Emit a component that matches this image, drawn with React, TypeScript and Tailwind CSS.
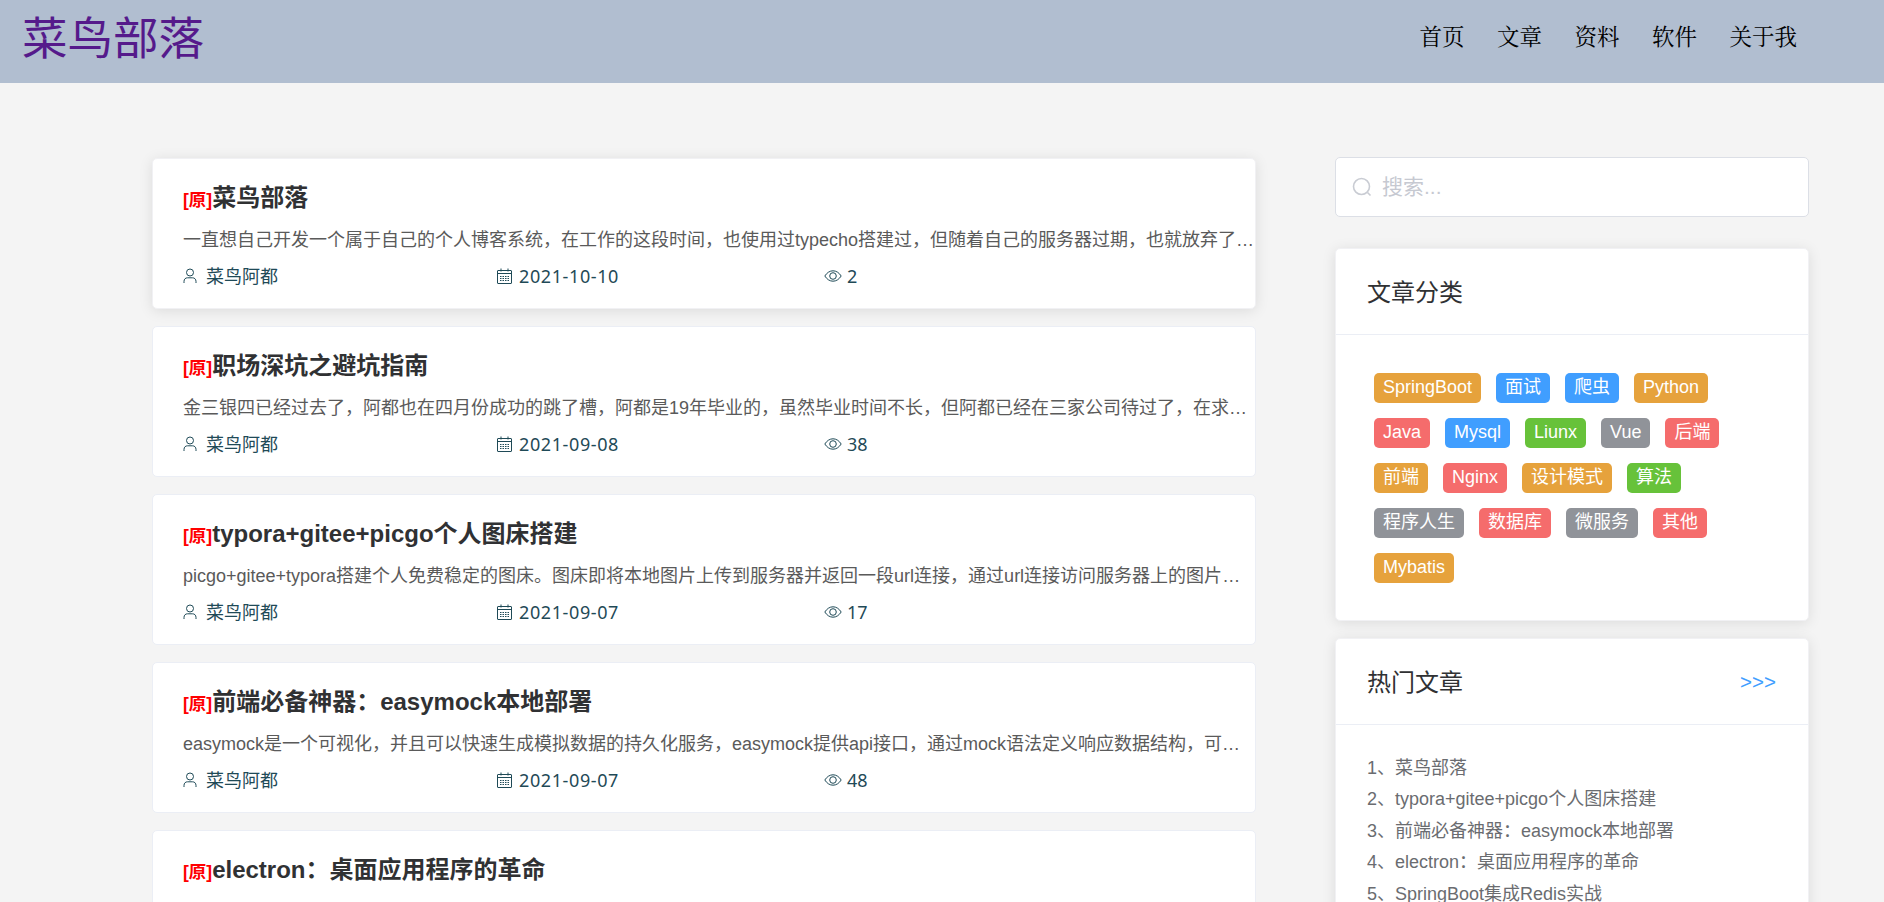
const sans = "font-['Liberation_Sans','Noto_Sans_CJK_SC',sans-serif]";

const articles = [
  { title: "菜鸟部落", desc: "一直想自己开发一个属于自己的个人博客系统，在工作的这段时间，也使用过typecho搭建过，但随着自己的服务器过期，也就放弃了之前的博客，后来决定自己动手开发", date: "2021-10-10", views: "2", hot: true },
  { title: "职场深坑之避坑指南", desc: "金三银四已经过去了，阿都也在四月份成功的跳了槽，阿都是19年毕业的，虽然毕业时间不长，但阿都已经在三家公司待过了，在求职的过程中也踩过不少的坑", date: "2021-09-08", views: "38" },
  { title: "typora+gitee+picgo个人图床搭建", desc: "picgo+gitee+typora搭建个人免费稳定的图床。图床即将本地图片上传到服务器并返回一段url连接，通过url连接访问服务器上的图片，这样就可以在任何地方查看图片了", date: "2021-09-07", views: "17" },
  { title: "前端必备神器：easymock本地部署", desc: "easymock是一个可视化，并且可以快速生成模拟数据的持久化服务，easymock提供api接口，通过mock语法定义响应数据结构，可以让前端开发不再依赖后端接口", date: "2021-09-07", views: "48" },
];

const O = "bg-[#e6a23c]", B = "bg-[#409eff]", R = "bg-[#f56c6c]", G = "bg-[#67c23a]", H = "bg-[#909399]";
const tagRows: [string, string][][] = [
  [["SpringBoot", O], ["面试", B], ["爬虫", B], ["Python", O]],
  [["Java", R], ["Mysql", B], ["Liunx", G], ["Vue", H], ["后端", R]],
  [["前端", O], ["Nginx", R], ["设计模式", O], ["算法", G]],
  [["程序人生", H], ["数据库", R], ["微服务", H], ["其他", R]],
  [["Mybatis", O]],
];

const hot = ["菜鸟部落", "typora+gitee+picgo个人图床搭建", "前端必备神器：easymock本地部署", "electron：桌面应用程序的革命", "SpringBoot集成Redis实战"];

function UserIcon() {
  return (
    <svg width="14" height="16" viewBox="0 0 14 16" fill="none" stroke="#1f4a57" strokeWidth="1" className="shrink-0">
      <circle cx="7" cy="4.5" r="3.5" />
      <path d="M1 15v-1.5C1 11 2.6 9.8 4.5 9.8h5c1.9 0 3.5 1.2 3.5 3.7V15" />
    </svg>
  );
}

function DateIcon() {
  return (
    <svg width="15" height="16" viewBox="0 0 15 16" fill="none" stroke="#1f4a57" strokeWidth="1" className="shrink-0">
      <rect x="0.5" y="2.5" width="14" height="13" rx="0.5" />
      <path d="M0.5 5.5h14M4 0.5v3M11 0.5v3" />
      <path d="M3 8.5h9M3 10.5h9M3 12.5h9" strokeDasharray="1.5 1" />
    </svg>
  );
}

function ViewIcon() {
  return (
    <svg width="18" height="12" viewBox="0 0 18 12" fill="none" stroke="#1f4a57" strokeWidth="1" className="shrink-0">
      <path d="M0.8 6C3 2.6 5.8 0.8 9 0.8S15 2.6 17.2 6C15 9.4 12.2 11.2 9 11.2S3 9.4 0.8 6Z" />
      <circle cx="9" cy="6" r="3.3" />
    </svg>
  );
}

function SearchIcon() {
  return (
    <svg width="20" height="20" viewBox="0 0 20 20" fill="none" stroke="#c9ccd3" strokeWidth="1.6" className="shrink-0">
      <circle cx="9.5" cy="9.5" r="8" />
      <path d="M15.5 15.5l3 3" />
    </svg>
  );
}

function Article({ a }: { a: (typeof articles)[number] }) {
  return (
    <div className={`h-[151px] shrink-0 rounded-[5px] bg-white border pl-[30px] pt-[20px] ${a.hot ? "border-[#f1f1f4] shadow-[0_2px_14px_rgba(0,0,0,0.1)]" : "border-[#ebeef5]"}`}>
      <div className="flex items-baseline h-[38px] leading-[38px]">
        <span className="text-[17.5px] font-bold text-[#ff0000]">[原]</span>
        <span className="text-[24px] font-bold text-[#303133]">{a.title}</span>
      </div>
      <div className="truncate mt-[7px] text-[18px] leading-[32px] text-[#5a5a5a]">{a.desc}</div>
      <div className="flex items-center h-[30px] mt-[5px] text-[18px] text-[#1f4a57] font-['Noto_Sans','Noto_Sans_CJK_SC',sans-serif]">
        <div className="w-[314px] flex items-center gap-[9px]">
          <UserIcon />
          <span>菜鸟阿都</span>
        </div>
        <div className="w-[327px] flex items-center gap-[7px]">
          <DateIcon />
          <span className="tracking-[0.6px]">{a.date}</span>
        </div>
        <div className="flex items-center gap-[5px]">
          <ViewIcon />
          <span>{a.views}</span>
        </div>
      </div>
    </div>
  );
}

export default function App() {
  return (
    <div className={`h-screen overflow-hidden bg-[#f4f4f4] ${sans}`}>
      <header className="h-[83px] bg-[#b1bed0] flex justify-between pl-[22px] pr-[87px]">
        <div className="text-[45.5px] leading-[80px] text-[#551a8b]">菜鸟部落</div>
        <nav className="flex gap-[32.5px] pt-[22px] text-[22.5px] leading-[32px] text-black font-['Liberation_Serif','Noto_Serif_CJK_SC',serif]">
          <span>首页</span>
          <span>文章</span>
          <span>资料</span>
          <span>软件</span>
          <span>关于我</span>
        </nav>
      </header>

      <main className="flex pt-[75px] pl-[152px]">
        <section className="w-[1104px] flex flex-col gap-[17px] shrink-0">
          {articles.map((a) => (
            <Article key={a.title} a={a} />
          ))}
          <div className="h-[151px] shrink-0 rounded-[5px] bg-white border border-[#ebeef5] pl-[30px] pt-[20px]">
            <div className="flex items-baseline h-[38px] leading-[38px]">
              <span className="text-[17.5px] font-bold text-[#ff0000]">[原]</span>
              <span className="text-[24px] font-bold text-[#303133]">electron：桌面应用程序的革命</span>
            </div>
          </div>
        </section>

        <aside className="w-[474px] ml-[79px] -mt-px shrink-0 flex flex-col">
          <div className="h-[60px] rounded-[5px] bg-white border border-[#dcdfe6] flex items-center pl-[16px] gap-[10px]">
            <SearchIcon />
            <span className="text-[21px] text-[#c6c9d1]">搜索...</span>
          </div>

          <div className="mt-[31px] h-[373px] rounded-[5px] bg-white border border-[#f1f1f4] shadow-[0_2px_14px_rgba(0,0,0,0.1)]">
            <div className="h-[86px] border-b border-[#ebeef5] pl-[31px] pt-[2px] flex items-center">
              <span className="text-[24px] text-[#303133]">文章分类</span>
            </div>
            <div className="pl-[38px] pt-[38px] flex flex-col gap-[15px]">
              {tagRows.map((row, i) => (
                <div key={i} className="flex gap-[15px]">
                  {row.map(([t, c]) => (
                    <span key={t} className={`h-[30px] leading-[29px] px-[9px] rounded-[5px] text-[18px] text-white ${c}`}>
                      {t}
                    </span>
                  ))}
                </div>
              ))}
            </div>
          </div>

          <div className="mt-[17px] h-[400px] rounded-[5px] bg-white border border-[#f1f1f4] shadow-[0_2px_14px_rgba(0,0,0,0.1)]">
            <div className="h-[86px] border-b border-[#ebeef5] pl-[31px] pr-[32px] pt-[2px] flex items-center justify-between">
              <span className="text-[24px] text-[#303133]">热门文章</span>
              <span className="text-[20.5px] text-[#409eff]">&gt;&gt;&gt;</span>
            </div>
            <ul className="pl-[31px] pt-[28px] text-[18px] leading-[31.4px] text-[#6a6c70]">
              {hot.map((h, i) => (
                <li key={h}>
                  {i + 1}、{h}
                </li>
              ))}
            </ul>
          </div>
        </aside>
      </main>
    </div>
  );
}
